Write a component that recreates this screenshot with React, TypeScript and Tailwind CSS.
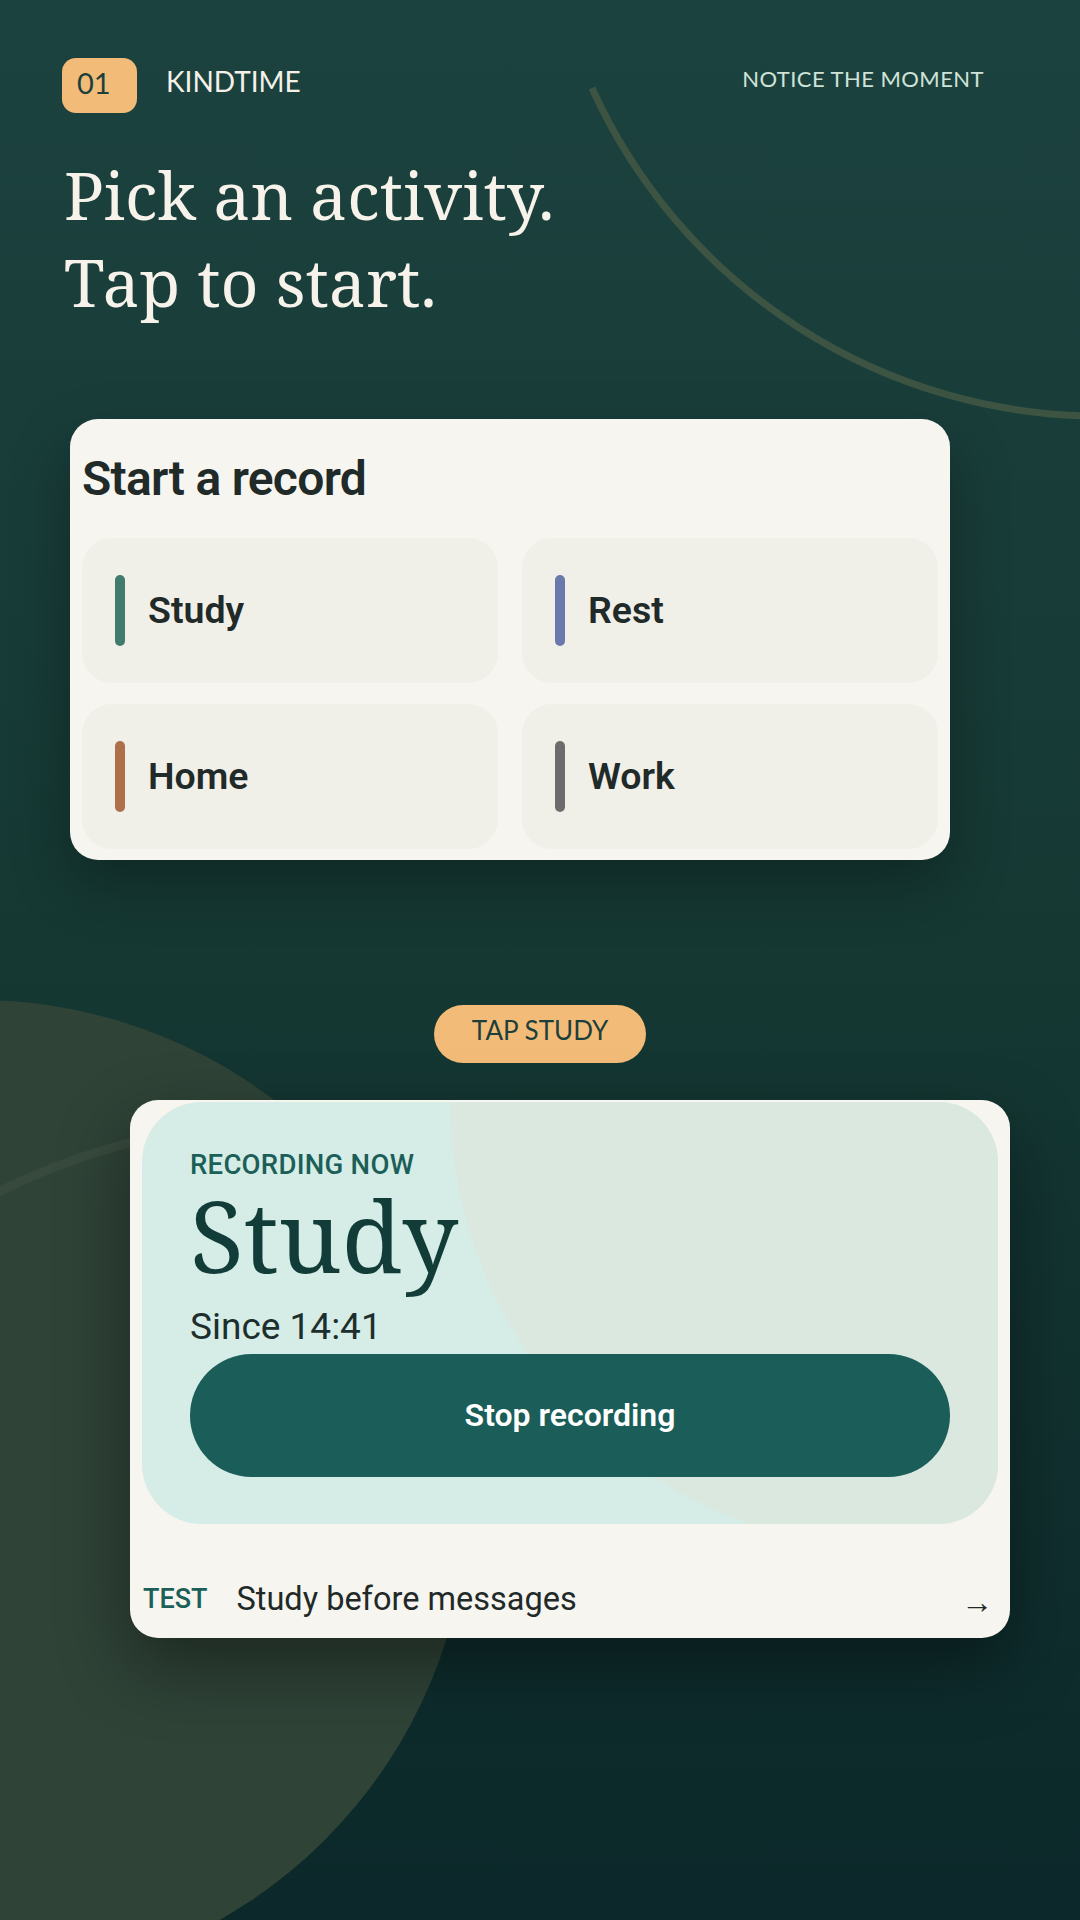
import React from "react";

const activities = [
  { name: "Study", color: "bg-[#417b6d]" },
  { name: "Rest", color: "bg-[#6a79ac]" },
  { name: "Home", color: "bg-[#ae6f4b]" },
  { name: "Work", color: "bg-[#6c6c6c]" },
];

export default function App() {
  return (
    <div className="relative h-[1920px] w-[1080px] overflow-hidden bg-[linear-gradient(180deg,#1c423f_0%,#153833_50%,#0c282a_100%)] font-['Roboto',sans-serif]">
      {/* Background shapes */}
      <div className="pointer-events-none absolute left-[-515px] top-[1000px] h-[984px] w-[984px] rounded-full bg-[#2f4337]" />
      <svg
        className="pointer-events-none absolute left-0 top-0"
        width="1080"
        height="1920"
        viewBox="0 0 1080 1920"
        fill="none"
      >
        <path d="M592 88 A557 557 0 0 0 1102 416" stroke="#3d5443" strokeWidth="7" />
        <path d="M-10 1196 A700 700 0 0 1 200 1128" stroke="#384a3e" strokeWidth="9" />
      </svg>

      <div className="relative">
        {/* Header */}
        <header className="flex items-start justify-between pl-[62px] pr-[96px] pt-[58px]">
          <div className="flex items-start">
            <div className="flex h-[55px] w-[75px] items-center rounded-[14px] bg-[#f3bb78] pb-[5px] pl-[15px] font-['Lato',sans-serif] text-[29px] leading-[1.2] text-[#1d3f3c]">
              01
            </div>
            <span className="ml-[29px] mt-[7px] font-['Lato',sans-serif] text-[28px] leading-[1.2] text-[#f4f1e8]">
              KINDTIME
            </span>
          </div>
          <span className="mt-[8px] font-['Lato',sans-serif] text-[22px] leading-[1.2] tracking-[0.02em] text-[#cfe3d8]">
            NOTICE THE MOMENT
          </span>
        </header>

        <h1 className="mt-[38px] pl-[64px] font-['Noto_Serif','DejaVu_Serif',serif] text-[66px] font-normal leading-[87px] text-[#f7f3ea]">
          Pick an activity.
          <br />
          Tap to start.
        </h1>

        {/* Start a record */}
        <section className="ml-[70px] mt-[94px] w-[880px] rounded-[28px] bg-[#f6f5f0] px-[12px] pb-[11px] pt-[31px] shadow-[0_24px_60px_rgba(0,0,0,0.3)]">
          <h2 className="text-[48px] font-semibold leading-[1.2] tracking-[-0.015em] text-[#1f2a29]">
            Start a record
          </h2>
          <div className="mt-[30px] grid grid-cols-2 gap-x-[24px] gap-y-[21px]">
            {activities.map((a) => (
              <div
                key={a.name}
                className="flex h-[145px] items-center rounded-[30px] bg-[#f0efe8] pl-[33px]"
              >
                <div className={`h-[71px] w-[10px] rounded-full ${a.color}`} />
                <span className="ml-[23px] text-[37.5px] font-semibold text-[#1f2a29]">{a.name}</span>
              </div>
            ))}
          </div>
        </section>

        <div className="mx-auto mt-[145px] flex h-[58px] w-[212px] items-center justify-center rounded-full bg-[#f3bb78] pb-[6px] font-['Lato',sans-serif] text-[26px] leading-[1.2] text-[#1c3f3b]">
          TAP STUDY
        </div>

        {/* Recording card */}
        <section className="ml-[130px] mt-[37px] w-[880px] rounded-[28px] bg-[#f6f5f0] px-[12px] pb-[17px] pt-[2px] shadow-[0_28px_70px_rgba(0,0,0,0.4)]">
          <div className="relative overflow-hidden rounded-[60px] bg-[#d6ece6] px-[48px] pb-[47px] pt-[47px]">
            <div className="absolute left-[308px] top-[-452px] h-[900px] w-[900px] rounded-full bg-[#dae8e0]" />
            <div className="relative">
              <p className="text-[27.5px] font-medium leading-[32px] tracking-[0.01em] text-[#1b5f58]">
                RECORDING NOW
              </p>
              <p className="mt-[5px] font-['Noto_Serif','DejaVu_Serif',serif] text-[99px] leading-[98px] text-[#113c38]">
                Study
              </p>
              <p className="mt-[21px] text-[37px] leading-[1.2] text-[#1c2f2c]">Since 14:41</p>
              <button className="mt-[5px] flex h-[123px] w-full items-center justify-center rounded-full bg-[#1a5d59] text-[32px] font-semibold text-white">
                Stop recording
              </button>
            </div>
          </div>
          <div className="mt-[53px] flex items-center pl-[1px] pr-[5px]">
            <span className="text-[27px] font-medium leading-[1.2] text-[#1b5f58]">TEST</span>
            <span className="ml-[29px] text-[32.5px] leading-[1.2] text-[#1f2a28]">Study before messages</span>
            <span className="ml-auto mt-[6px] text-[32px] leading-[1.2] text-[#1f2a28]">→</span>
          </div>
        </section>
      </div>
    </div>
  );
}
